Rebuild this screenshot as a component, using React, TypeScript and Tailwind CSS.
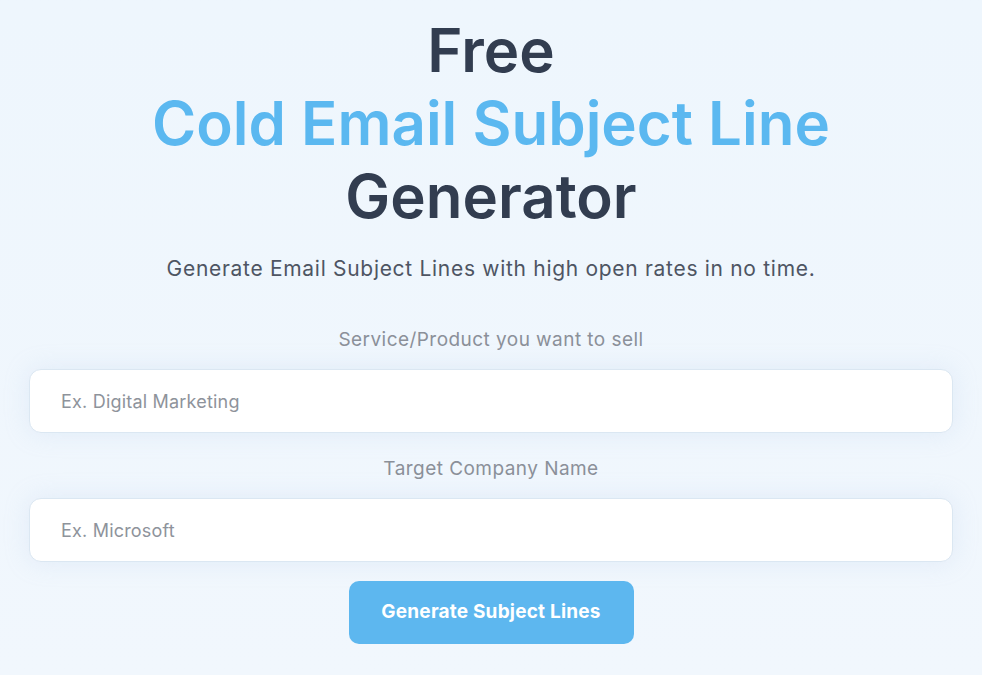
import React from "react";

const fields = [
  { label: "Service/Product you want to sell", placeholder: "Ex. Digital Marketing" },
  { label: "Target Company Name", placeholder: "Ex. Microsoft" },
];

const App = () => {
  return (
    <div
      className="min-h-[675px] w-full bg-gradient-to-b from-[#eef6fd] to-[#f1f7fd] text-center"
      style={{ fontFamily: "Inter, 'Noto Sans', sans-serif" }}
    >
      <div className="mx-auto max-w-[982px] px-[29px] pt-[14px]">
        {/* ===== Heading ===== */}
        <h1 className="text-[60px] font-semibold leading-[73px] tracking-[0px] text-[#323d50]">
          Free
          <br />
          <span className="text-[#5bb8f0]">Cold Email Subject Line</span>
          <br />
          Generator
        </h1>

        <p className="mt-[22px] text-[21px] leading-[28px] tracking-[0.7px] text-[#4e5563]">
          Generate Email Subject Lines with high open rates in no time.
        </p>

        {/* ===== Form ===== */}
        <form className="mt-[45px] flex flex-col items-center">
          {fields.map((field, i) => (
            <div key={i} className="flex w-full flex-col items-center">
              <label className="text-[19px] leading-[24px] tracking-[0.45px] text-[#8b9099]">
                {field.label}
              </label>
              <input
                type="text"
                placeholder={field.placeholder}
                className="mt-[17px] mb-[24px] h-[64px] w-full rounded-[12px] border border-[#dbe7f2] bg-white px-[31px] text-[18px] tracking-[0.2px] text-[#333] shadow-[0_0_24px_rgba(180,205,230,0.25)] outline-none placeholder:text-[#8e939b]"
              />
            </div>
          ))}

          <button
            type="button"
            className="-mt-[5px] h-[63px] w-[285px] rounded-[10px] bg-[#5db7ef] text-[19px] font-bold tracking-[0.2px] text-white"
          >
            Generate Subject Lines
          </button>
        </form>
      </div>
    </div>
  );
};

export default App;
